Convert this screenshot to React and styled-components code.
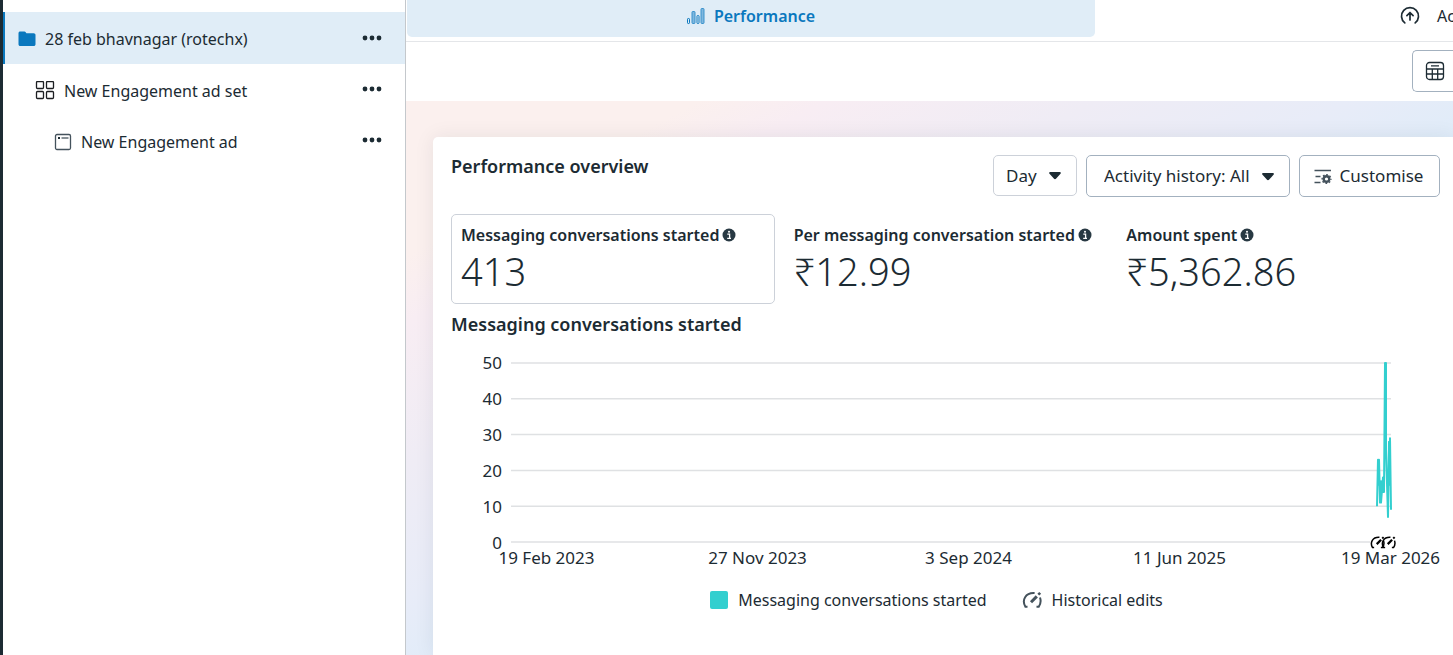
import React from 'react';
import styled, { createGlobalStyle } from 'styled-components';

const GlobalStyle = createGlobalStyle`
    * {
        box-sizing: border-box;
    }

    body {
        margin: 0;
        background: #ffffff;
        color: #1c2b33;
        font-family: 'Noto Sans', 'Liberation Sans', sans-serif;
        font-size: 16px;
        line-height: 24px;
        overflow: hidden;
    }

    h1, h2, p, ul, dl, dd {
        margin: 0;
        padding: 0;
    }

    button, select {
        font: inherit;
        color: inherit;
        cursor: pointer;
    }

    svg {
        display: block;
        flex: none;
    }
`;

const Page = styled.div`
    display: flex;
    height: 100vh;
    border-left: 3px solid #1c2b33;
`;

const Sidebar = styled.nav`
    width: 403px;
    flex: none;
    padding-top: 12px;
    border-right: 1px solid #c4c8cc;
`;

const Tree = styled.ul`
    list-style: none;
`;

const TreeRow = styled.li`
    display: flex;
    align-items: center;
    height: ${(props) => (props.$active ? '52px' : '51px')};
    padding: 2px 19px 0 ${(props) => props.$indent}px;
    border-left: 2px solid ${(props) => (props.$active ? '#0a78be' : 'transparent')};
    background: ${(props) => (props.$active ? '#e0edf7' : 'transparent')};
`;

const TreeLink = styled.a`
    display: flex;
    align-items: center;
    gap: 9px;
    flex: 1;
    color: inherit;
    text-decoration: none;
`;

const MoreButton = styled.button`
    display: flex;
    width: 28px;
    height: 28px;
    padding: 0 0 3px;
    align-items: center;
    justify-content: center;
    border: none;
    background: none;
`;

const Main = styled.main`
    display: flex;
    flex-direction: column;
    flex: 1;
    min-width: 0;
    overflow: hidden;
`;

const TabBar = styled.div`
    display: flex;
    justify-content: space-between;
    height: 42px;
    padding-left: 1px;
    border-bottom: 1px solid #e4e6e9;
`;

const Tab = styled.button`
    display: flex;
    align-items: center;
    justify-content: center;
    gap: 9px;
    width: 688px;
    height: 37px;
    padding: 0 0 6px;
    border: none;
    border-radius: 0 0 5px 5px;
    background: #e0edf7;
    color: #0a78be;
    font-weight: 600;
`;

const HeaderAction = styled.button`
    display: flex;
    align-items: center;
    gap: 17px;
    width: 53px;
    height: 37px;
    padding: 0 0 6px;
    border: none;
    background: none;
    white-space: nowrap;
    overflow: hidden;
`;

const Toolbar = styled.div`
    display: flex;
    justify-content: flex-end;
    height: 59px;
    padding-top: 8px;
    flex: none;
`;

const TableButton = styled.button`
    display: flex;
    align-items: center;
    width: 41px;
    height: 42px;
    padding: 0 0 0 12px;
    border: 1px solid #a3b1bf;
    border-right: none;
    border-radius: 5px 0 0 5px;
    background: #ffffff;
`;

const Canvas = styled.div`
    flex: 1;
    padding: 36px 0 0 27px;
    background: linear-gradient(to bottom right, #fbf0ee 0%, #fbf0ee 14%, #f8edf3 20%, #efecf5 33%, #e8ecf8 45%, #deecf9 55%);
`;

const Card = styled.section`
    height: 100%;
    padding: 18px 13px 0 18px;
    border-radius: 5px 0 0 0;
    background: #ffffff;
    box-shadow: 0 0 20px rgba(28, 43, 51, 0.08);
`;

const CardHeader = styled.header`
    display: flex;
    justify-content: space-between;
    align-items: flex-start;
`;

const Title = styled.h1`
    font-size: 18px;
    line-height: 22px;
    font-weight: 600;
`;

const ChartTitle = styled.h2`
    margin-top: 8px;
    font-size: 18px;
    line-height: 24px;
    font-weight: 600;
`;

const Controls = styled.div`
    display: flex;
    gap: 9px;
    font-size: 17px;
`;

const SelectBox = styled.label`
    display: grid;
    align-items: center;
    height: ${(props) => (props.$muted ? '41px' : '42px')};
    border: 1px solid ${(props) => (props.$muted ? '#ccd1d9' : '#a3b1bf')};
    border-radius: 5px;

    > * {
        grid-area: 1 / 1;
    }

    > svg {
        justify-self: end;
        margin-right: 14px;
        pointer-events: none;
    }
`;

const Select = styled.select`
    appearance: none;
    width: ${(props) => props.$width}px;
    height: 100%;
    padding: 0 0 0 ${(props) => props.$inset}px;
    border: none;
    background: none;
`;

const CustomiseButton = styled.button`
    display: flex;
    align-items: center;
    justify-content: center;
    gap: 8px;
    width: 141px;
    height: 42px;
    padding: 0 2px 0 0;
    border: 1px solid #a3b1bf;
    border-radius: 5px;
    background: #ffffff;
`;

const Metrics = styled.dl`
    display: grid;
    grid-template-columns: repeat(3, 1fr);
    gap: 9px;
    margin-top: 17px;
`;

const Metric = styled.div`
    height: 90px;
    padding: 8px 9px;
    border: 1px solid ${(props) => (props.$selected ? '#ccd1d9' : 'transparent')};
    border-radius: 5px;
`;

const MetricLabel = styled.dt`
    display: flex;
    align-items: center;
    gap: 3px;
    font-weight: 600;
    white-space: nowrap;
`;

const MetricValue = styled.dd`
    font-size: 38px;
    line-height: 48px;
    font-weight: 300;
`;

const Chart = styled.figure`
    display: grid;
    grid-template-columns: 51px 1fr;
    column-gap: 9px;
    margin: 15px 49px 0 0;
    font-size: 17px;
`;

const YAxis = styled.div`
    display: flex;
    flex-direction: column;
    gap: 12px;
    text-align: right;
`;

const Plot = styled.div`
    position: relative;
    padding: 12px 0 13px;

    > svg {
        width: 100%;
        height: 179px;
        overflow: visible;
    }
`;

const EditMarkers = styled.div`
    position: absolute;
    right: -5px;
    bottom: 5px;
    display: flex;
    background: #ffffff;

    svg + svg {
        margin-left: -4px;
    }
`;

const XAxis = styled.div`
    grid-column: 1 / -1;
    display: grid;
    grid-template-columns: repeat(5, 1fr);
    margin: -9px -105px 0 -10px;
    text-align: center;
    white-space: nowrap;
`;

const Legend = styled.figcaption`
    grid-column: 1 / -1;
    display: flex;
    justify-content: center;
    gap: 35px;
    margin: 18px -31px 0 0;
    font-size: 16px;
`;

const LegendItem = styled.span`
    display: flex;
    align-items: center;
    gap: 10px;
`;

const Swatch = styled.span`
    width: 18px;
    height: 18px;
    border-radius: 2px;
    background: #33cfcf;
`;

const FolderIcon = () => (
    <svg width="18" height="18" viewBox="0 0 18 18" fill="#0a78be">
        <path d="M2.200 1.500h4.200c.6 0 1 .2 1.300.7l.7 1.100h7.300c1.100 0 1.800.7 1.800 1.800v9.200c0 1.100-.7 1.800-1.800 1.800H2.300C1.200 16.100.5 15.400.5 14.300V3.200c0-1 .7-1.700 1.700-1.700z" />
    </svg>
);

const AdSetIcon = () => (
    <svg width="20" height="20" viewBox="0 0 20 20" fill="none" stroke="#1c1e21" strokeWidth="1.300">
        <rect x="1.500" y="0.500" width="7" height="7" rx="1" />
        <rect x="11.500" y="0.500" width="7" height="7" rx="1" />
        <rect x="1.500" y="10.500" width="7" height="7" rx="1" />
        <rect x="11.500" y="10.500" width="7" height="7" rx="1" />
    </svg>
);

const AdIcon = () => (
    <svg width="18" height="18" viewBox="0 0 18 18" fill="none" stroke="#44525c" strokeWidth="1.300">
        <rect x="1.500" y="1.500" width="15" height="15" rx="1.500" />
        <path d="M7.500 5h7" />
        <path d="M4 5h2" stroke="#1c2b33" strokeWidth="2" />
    </svg>
);

const DotsIcon = () => (
    <svg width="20" height="6" viewBox="0 0 20 6" fill="#1c2b33">
        <circle cx="3" cy="3" r="2.400" />
        <circle cx="10" cy="3" r="2.400" />
        <circle cx="17" cy="3" r="2.400" />
    </svg>
);

const BarsIcon = () => (
    <svg width="18" height="18" viewBox="0 0 18 18" fill="#7fb7de" stroke="#3a93cd">
        <rect x="0.500" y="11.500" width="2" height="5" rx="0.700" fill="none" stroke="#0a78be" />
        <rect x="5" y="4.500" width="3" height="12" rx="0.700" />
        <rect x="10" y="8.500" width="2" height="8" rx="0.700" fill="none" stroke="#0a78be" />
        <rect x="14" y="1.500" width="3" height="15" rx="0.700" />
    </svg>
);

const UploadIcon = () => (
    <svg width="20" height="20" viewBox="0 0 20 20" fill="none" stroke="#1c2b33" strokeWidth="1.700" strokeLinecap="round" strokeLinejoin="round">
        <path d="M4.800 16.900a8.500 8.500 0 1 1 10.400 0" />
        <path d="M10 14V6.800M6.900 9.600L10 6.500l3.100 3.100" />
    </svg>
);

const TableIcon = () => (
    <svg width="20" height="20" viewBox="0 0 20 20" fill="none" stroke="#1c2b33" strokeWidth="1.300">
        <rect x="1.500" y="1.500" width="17" height="17" rx="3" />
        <path d="M1.500 8h17M1.500 13h17M7.300 8v10.500M12.700 8v10.500M6 4.800h8" />
    </svg>
);

const CaretIcon = () => (
    <svg width="14" height="9" viewBox="0 0 14 9" fill="#1c2b33">
        <path d="M2.300 1h9.400c1.200 0 1.500 1 .8 1.700L8.200 7.600c-.7.700-1.700.7-2.400 0L1.500 2.700C.8 2 1.100 1 2.300 1z" />
    </svg>
);

const CustomiseIcon = () => (
    <svg width="18" height="18" viewBox="0 0 18 18" fill="none" stroke="#44525c">
        <path d="M.5 3.500h16.500M1.500 9.500h5M.5 15.500h6" strokeWidth="1.400" />
        <circle cx="12.500" cy="12" r="2.800" strokeWidth="2.400" />
        <circle cx="12.500" cy="12" r="4.400" strokeWidth="1.400" strokeDasharray="1.728 1.728" strokeDashoffset="0.864" />
    </svg>
);

const InfoIcon = () => (
    <svg width="14" height="14" viewBox="0 0 14 14">
        <circle cx="7" cy="7" r="6.500" fill="#283943" />
        <path d="M5.300 6.200h2.300v4M5.200 10.400h3.800" fill="none" stroke="#ffffff" strokeWidth="1.300" />
        <circle cx="7" cy="3.700" r="1" fill="#ffffff" />
    </svg>
);

const EditsIcon = ({ size = 20, color = '#44525c' }) => (
    <svg width={size} height={size} viewBox="0 0 20 20" fill="none" stroke={color} strokeWidth="2">
        <path d="M5.500 16.800H3.400C-.5 10 3.500 2.500 12.600 3.100" />
        <path d="M18 7.500c1.200 3.500.5 6.800-1.300 9.300h-2.200" />
        <path d="M9 12.200l5.800-5.800" strokeWidth="3" />
        <path d="M16.300 4.700l1.900-1.900" strokeWidth="2.600" />
    </svg>
);

const treeItems = [
    { label: '28 feb bhavnagar (rotechx)', icon: FolderIcon, indent: 13, active: true },
    { label: 'New Engagement ad set', icon: AdSetIcon, indent: 30 },
    { label: 'New Engagement ad', icon: AdIcon, indent: 49 },
];

const metrics = [
    { label: 'Messaging conversations started', value: '413', selected: true },
    { label: 'Per messaging conversation started', value: '₹12.99' },
    { label: 'Amount spent', value: '₹5,362.86' },
];

const ticks = [50, 40, 30, 20, 10, 0];
const dates = ['19 Feb 2023', '27 Nov 2023', '3 Sep 2024', '11 Jun 2025', '19 Mar 2026'];

// [x, conversations] on an 880 wide plot
const series = [
    [866, 10], [867, 23], [868, 16], [868, 23], [869, 11], [870, 17], [870, 11], [872, 18],
    [872, 14], [873, 14], [874, 50], [875, 50], [875, 26], [877, 7], [878, 28], [878, 16], [879, 29], [880, 9],
];

const App = () => {
    const line = series.map(([x, value]) => `${x},${180 - value * 3.6}`).join(' ');

    return (
        <>
            <GlobalStyle />
            <Page>
                <Sidebar aria-label="Campaign">
                    <Tree>
                        {treeItems.map(({ label, icon: Icon, indent, active }) => (
                            <TreeRow key={label} $indent={indent} $active={active}>
                                <TreeLink href="#">
                                    <Icon />
                                    {label}
                                </TreeLink>
                                <MoreButton aria-label={`More options for ${label}`}>
                                    <DotsIcon />
                                </MoreButton>
                            </TreeRow>
                        ))}
                    </Tree>
                </Sidebar>
                <Main>
                    <TabBar>
                        <Tab>
                            <BarsIcon />
                            Performance
                        </Tab>
                        <HeaderAction>
                            <UploadIcon />
                            Ac
                        </HeaderAction>
                    </TabBar>
                    <Toolbar>
                        <TableButton aria-label="Table">
                            <TableIcon />
                        </TableButton>
                    </Toolbar>
                    <Canvas>
                        <Card>
                            <CardHeader>
                                <Title>Performance overview</Title>
                                <Controls>
                                    <SelectBox $muted>
                                        <Select $width={82} $inset={12} aria-label="Breakdown">
                                            <option>Day</option>
                                        </Select>
                                        <CaretIcon />
                                    </SelectBox>
                                    <SelectBox>
                                        <Select $width={202} $inset={17} aria-label="Activity history">
                                            <option>Activity history: All</option>
                                        </Select>
                                        <CaretIcon />
                                    </SelectBox>
                                    <CustomiseButton>
                                        <CustomiseIcon />
                                        Customise
                                    </CustomiseButton>
                                </Controls>
                            </CardHeader>
                            <Metrics>
                                {metrics.map((metric) => (
                                    <Metric key={metric.label} $selected={metric.selected}>
                                        <MetricLabel>
                                            {metric.label}
                                            <InfoIcon />
                                        </MetricLabel>
                                        <MetricValue>{metric.value}</MetricValue>
                                    </Metric>
                                ))}
                            </Metrics>
                            <ChartTitle>Messaging conversations started</ChartTitle>
                            <Chart>
                                <YAxis>
                                    {ticks.map((tick) => (
                                        <span key={tick}>{tick}</span>
                                    ))}
                                </YAxis>
                                <Plot>
                                    <svg viewBox="0 0 880 180" preserveAspectRatio="none">
                                        {ticks.map((tick) => (
                                            <path key={tick} d={`M0 ${180 - tick * 3.6}H880`} stroke="#dfe1e3" strokeWidth="1.500" />
                                        ))}
                                        <polyline
                                            points={line}
                                            fill="none"
                                            stroke="#33cfcf"
                                            strokeWidth="2"
                                            strokeLinejoin="round"
                                            vectorEffect="non-scaling-stroke"
                                        />
                                    </svg>
                                    <EditMarkers>
                                        <EditsIcon size={15} color="#000000" />
                                        <EditsIcon size={15} color="#000000" />
                                    </EditMarkers>
                                </Plot>
                                <XAxis>
                                    {dates.map((date) => (
                                        <span key={date}>{date}</span>
                                    ))}
                                </XAxis>
                                <Legend>
                                    <LegendItem>
                                        <Swatch />
                                        Messaging conversations started
                                    </LegendItem>
                                    <LegendItem>
                                        <EditsIcon />
                                        Historical edits
                                    </LegendItem>
                                </Legend>
                            </Chart>
                        </Card>
                    </Canvas>
                </Main>
            </Page>
        </>
    );
};

export default App;
